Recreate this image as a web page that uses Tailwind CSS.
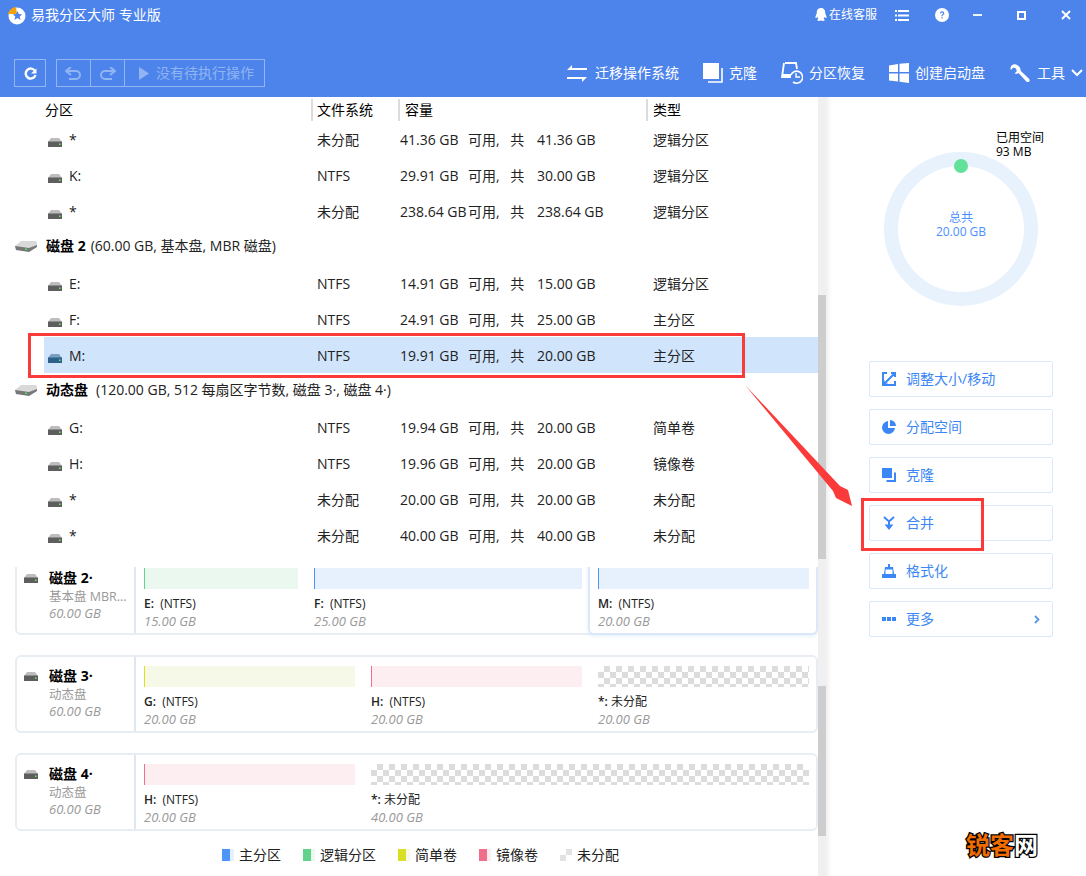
<!DOCTYPE html>
<html lang="zh">
<head>
<meta charset="utf-8">
<title>易我分区大师</title>
<script src="https://cdn.jsdelivr.net/npm/@tailwindcss/browser@4"></script>
</head>
<body class="bg-white">
<div class="relative w-[1086px] h-[876px] overflow-hidden bg-white text-black text-[14px] leading-5 font-['Open_Sans','Noto_Sans_CJK_SC',sans-serif]">

  <!-- header -->
  <header class="h-[97px] bg-[#4d84eb] text-white">
    <div class="h-[30px] flex items-center">
      <svg class="ml-[7px] w-[19px] h-[19px]" viewBox="0 0 19 19">
        <circle cx="10" cy="10" r="8.5" fill="#fff"/>
        <path d="M1 8 C2 4 5 1.500 9 1 L10 8 Z" fill="#f5a30c"/>
        <path d="M10.500 5l1.400 3.100 3.300.3-2.500 2.200.8 3.300-3-1.800-3 1.800.8-3.300-2.500-2.200 3.300-.3z" fill="#4d84eb"/>
      </svg>
      <span class="ml-[5px] w-[784px]">易我分区大师 专业版</span>
      <svg class="w-[12px] h-[14px]" viewBox="0 0 12 14"><path d="M6 0c3 0 4.200 2.200 4.200 4.500 0 1.500.6 2 1.200 3.800.5 1.800-.3 2.200-1.200 1.200L9.500 9c-.2 1-.7 1.700-1 2 1 .3 1.500 1 1 1.600-.6.600-2.400.4-3.500-.1-1.100.5-2.900.7-3.500.1-.5-.6 0-1.300 1-1.600-.3-.3-.8-1-1-2l-.7.5C.9 10.500.1 10.100.6 8.300 1.200 6.500 1.800 6 1.800 4.500 1.800 2.200 3 0 6 0z" fill="#fff"/></svg>
      <span class="ml-[2px] text-[12px] w-[48px] whitespace-nowrap">在线客服</span>
      <svg class="ml-[18px] w-[14px] h-[11px]" viewBox="0 0 14 11" fill="#fff"><rect width="2" height="2"/><rect x="3" width="11" height="2"/><rect y="4.500" width="2" height="2"/><rect x="3" y="4.500" width="11" height="2"/><rect y="9" width="2" height="2"/><rect x="3" y="9" width="11" height="2"/></svg>
      <svg class="ml-[26px] w-[14px] h-[14px]" viewBox="0 0 14 14"><circle cx="7" cy="7" r="7" fill="#fff"/><path d="M4.800 5.300C4.900 4 5.900 3.300 7.100 3.300c1.300 0 2.200.8 2.200 1.900 0 1.600-1.800 1.600-1.800 3.100H6.300c0-2 1.700-2 1.700-3.100 0-.5-.4-.8-.9-.8-.6 0-1 .4-1 1zM6.300 9.200h1.300v1.400H6.300z" fill="#4d84eb"/></svg>
      <div class="ml-[24px] w-[9px] h-[2px] bg-white/90"></div>
      <div class="ml-[35px] w-[9px] h-[9px] border-2 border-white"></div>
      <svg class="ml-[35px] w-[10px] h-[10px]" viewBox="0 0 10 10"><path d="M1 1l8 8M9 1l-8 8" stroke="#fff" stroke-width="2"/></svg>
    </div>
    <div class="mt-[29px] h-[28px] flex items-center">
      <div class="ml-[14px] w-[32px] h-[28px] border border-white/40 flex items-center justify-center">
        <svg class="w-[13px] h-[13px]" viewBox="0 0 13 13"><path d="M11 4A5 5 0 1 0 11.500 8" fill="none" stroke="#fff" stroke-width="2.400"/><path d="M7 6.500h5.500V1.500z" fill="#fff"/></svg>
      </div>
      <div class="ml-[10px] w-[209px] h-[28px] border border-white/40 flex items-stretch text-[#91b4f3]">
        <div class="w-[34px] border-r border-white/40 flex items-center justify-center">
          <svg class="w-[17px] h-[13px]" viewBox="0 0 17 13"><path d="M2 4h9a4 4 0 0 1 0 8H4" fill="none" stroke="#91b4f3" stroke-width="2"/><path d="M6 0L1 4l5 4" fill="none" stroke="#91b4f3" stroke-width="2"/></svg>
        </div>
        <div class="w-[34px] border-r border-white/40 flex items-center justify-center">
          <svg class="w-[17px] h-[13px]" viewBox="0 0 17 13"><path d="M15 4H6a4 4 0 0 0 0 8h7" fill="none" stroke="#91b4f3" stroke-width="2"/><path d="M11 0l5 4-5 4" fill="none" stroke="#91b4f3" stroke-width="2"/></svg>
        </div>
        <div class="flex items-center pl-[14px]">
          <svg class="w-[10px] h-[13px]" viewBox="0 0 10 13"><path d="M0 0l10 6.500L0 13z" fill="#91b4f3"/></svg>
          <span class="ml-[7px]">没有待执行操作</span>
        </div>
      </div>
      <div class="ml-[302px] flex items-center whitespace-nowrap">
        <svg class="w-[20px] h-[17px]" viewBox="0 0 20 17" fill="#fff"><path d="M5 0v3h15v2H0z"/><path d="M15 17v-3H0v-2h20z"/></svg>
        <span class="ml-[8px] w-[84px]">迁移操作系统</span>
        <svg class="ml-[24px] w-[20px] h-[20px]" viewBox="0 0 20 20"><rect width="16" height="16" fill="#fff"/><path d="M19 5v14H5" fill="none" stroke="#fff" stroke-width="1.600"/></svg>
        <span class="ml-[6px] w-[28px]">克隆</span>
        <svg class="ml-[24px] w-[22px] h-[22px]" viewBox="0 0 22 22"><path d="M4 1h11l1 6M3 1L1 15h9" fill="none" stroke="#fff" stroke-width="1.800"/><rect x="1" y="12" width="9" height="3" fill="#fff"/><path d="M10 13a6 6 0 1 1 2 7" fill="none" stroke="#fff" stroke-width="1.600"/><path d="M15 11v4h4" fill="none" stroke="#fff" stroke-width="1.400"/></svg>
        <span class="ml-[6px] w-[56px]">分区恢复</span>
        <svg class="ml-[24px] w-[20px] h-[20px]" viewBox="0 0 20 20" fill="#fff"><path d="M0 2.500L9 1v8H0zM10.500.8L20 0v9h-9.500zM0 10.500h9v8L0 17.500zM10.500 10.500H20V20l-9.500-1.200z"/></svg>
        <span class="ml-[6px] w-[70px]">创建启动盘</span>
        <svg class="ml-[25px] w-[20px] h-[20px]" viewBox="0 0 20 20"><path d="M6 1.500C3.500.5 1 2 .6 4.500c-.2 1 0 1.800.3 2.400L3.300 4.600 6 5.500l.8 2.700-2.300 2.300c1.400.6 3 .3 4-.6l7.800 8.600c.8.800 2 .8 2.800 0 .8-.8.700-2-.1-2.800l-8.400-8C11 5.200 9 2.700 6 1.500z" fill="#fff"/></svg>
        <span class="ml-[7px] w-[28px]">工具</span>
        <svg class="ml-[6px] w-[12px] h-[8px]" viewBox="0 0 12 8"><path d="M1 1l5 5 5-5" fill="none" stroke="#fff" stroke-width="2"/></svg>
      </div>
    </div>
  </header>

  <!-- main -->
  <main class="flex h-[779px]">
    <section class="w-[827px] flex flex-col">
      <!-- table -->
      <div class="h-[470px] flex relative z-10 bg-white">
        <div class="w-[818px] overflow-hidden">
          <div class="h-[25px] flex items-center">
            <div class="w-[313px] pl-[45px] h-[22px] leading-[22px] border-r-2 border-[#dcdcdc]">分区</div>
            <div class="w-[87px] pl-[4px] h-[22px] leading-[22px] border-r-2 border-[#dcdcdc]">文件系统</div>
            <div class="w-[248px] pl-[5px] h-[22px] leading-[22px] border-r-2 border-[#dcdcdc]">容量</div>
            <div class="pl-[5px] leading-[22px]">类型</div>
          </div>

          <div class="h-[36px] flex items-center text-[#222]">
            <div class="w-[317px] pl-[48px] flex items-center"><svg class="mt-[4px] w-[14px] h-[9px]" viewBox="0 0 14 9"><path d="M3 0h8l3 4H0z" fill="#bdbdbd"/><rect y="3.500" width="14" height="5.500" fill="#5e5e5e"/><rect x="11" y="5.500" width="1.500" height="1.500" fill="#5f5"/></svg><span class="ml-[7px]">*</span></div>
            <div class="w-[83px]">未分配</div><div class="w-[68px]">41.36 GB</div><div class="w-[69px] [word-spacing:7px]">可用, 共</div><div class="w-[116px]">41.36 GB</div><div>逻辑分区</div>
          </div>
          <div class="h-[36px] flex items-center text-[#222]">
            <div class="w-[317px] pl-[48px] flex items-center"><svg class="mt-[4px] w-[14px] h-[9px]" viewBox="0 0 14 9"><path d="M3 0h8l3 4H0z" fill="#bdbdbd"/><rect y="3.500" width="14" height="5.500" fill="#5e5e5e"/><rect x="11" y="5.500" width="1.500" height="1.500" fill="#5f5"/></svg><span class="ml-[7px]">K:</span></div>
            <div class="w-[83px]">NTFS</div><div class="w-[68px]">29.91 GB</div><div class="w-[69px] [word-spacing:7px]">可用, 共</div><div class="w-[116px]">30.00 GB</div><div>逻辑分区</div>
          </div>
          <div class="h-[36px] flex items-center text-[#222]">
            <div class="w-[317px] pl-[48px] flex items-center"><svg class="mt-[4px] w-[14px] h-[9px]" viewBox="0 0 14 9"><path d="M3 0h8l3 4H0z" fill="#bdbdbd"/><rect y="3.500" width="14" height="5.500" fill="#5e5e5e"/><rect x="11" y="5.500" width="1.500" height="1.500" fill="#5f5"/></svg><span class="ml-[7px]">*</span></div>
            <div class="w-[83px]">未分配</div><div class="w-[68px] whitespace-nowrap">238.64 GB</div><div class="w-[69px] [word-spacing:7px]">可用, 共</div><div class="w-[116px]">238.64 GB</div><div>逻辑分区</div>
          </div>

          <div class="h-[32px] mb-[4px] flex items-center">
            <svg class="ml-[15px] w-[22px] h-[11px]" viewBox="0 0 22 11"><path d="M6 0h15l1 2v3L14 10 1 8 0 5z" fill="#d9d9d9"/><path d="M0 5l14 2 8-3v2l-8 5L1 9z" fill="#777"/><rect x="10" y="7.500" width="2" height="1.500" fill="#5d5"/></svg>
            <span class="ml-[9px] font-bold">磁盘 2</span><span class="ml-[5px] text-[#222]">(60.00 GB, 基本盘, MBR 磁盘)</span>
          </div>

          <div class="h-[36px] flex items-center text-[#222]">
            <div class="w-[317px] pl-[48px] flex items-center"><svg class="mt-[4px] w-[14px] h-[9px]" viewBox="0 0 14 9"><path d="M3 0h8l3 4H0z" fill="#bdbdbd"/><rect y="3.500" width="14" height="5.500" fill="#5e5e5e"/><rect x="11" y="5.500" width="1.500" height="1.500" fill="#5f5"/></svg><span class="ml-[7px]">E:</span></div>
            <div class="w-[83px]">NTFS</div><div class="w-[68px]">14.91 GB</div><div class="w-[69px] [word-spacing:7px]">可用, 共</div><div class="w-[116px]">15.00 GB</div><div>逻辑分区</div>
          </div>
          <div class="h-[36px] flex items-center text-[#222]">
            <div class="w-[317px] pl-[48px] flex items-center"><svg class="mt-[4px] w-[14px] h-[9px]" viewBox="0 0 14 9"><path d="M3 0h8l3 4H0z" fill="#bdbdbd"/><rect y="3.500" width="14" height="5.500" fill="#5e5e5e"/><rect x="11" y="5.500" width="1.500" height="1.500" fill="#5f5"/></svg><span class="ml-[7px]">F:</span></div>
            <div class="w-[83px]">NTFS</div><div class="w-[68px]">24.91 GB</div><div class="w-[69px] [word-spacing:7px]">可用, 共</div><div class="w-[116px]">25.00 GB</div><div>主分区</div>
          </div>
          <div class="h-[36px] -mt-[1px] mb-[1px] pt-[2px] flex items-center text-[#222] ml-[44px] bg-[#d0e5fc]">
            <div class="w-[273px] pl-[4px] flex items-center"><svg class="mt-[4px] w-[14px] h-[9px]" viewBox="0 0 14 9"><path d="M3 0h8l3 4H0z" fill="#7b9fc0"/><rect y="3.500" width="14" height="5.500" fill="#2f6089"/><rect x="11" y="5.500" width="1.500" height="1.500" fill="#5f5"/></svg><span class="ml-[7px]">M:</span></div>
            <div class="w-[83px]">NTFS</div><div class="w-[68px]">19.91 GB</div><div class="w-[69px] [word-spacing:7px]">可用, 共</div><div class="w-[116px]">20.00 GB</div><div>主分区</div>
          </div>

          <div class="h-[32px] mb-[4px] flex items-center">
            <svg class="ml-[15px] w-[22px] h-[11px]" viewBox="0 0 22 11"><path d="M6 0h15l1 2v3L14 10 1 8 0 5z" fill="#d9d9d9"/><path d="M0 5l14 2 8-3v2l-8 5L1 9z" fill="#777"/><rect x="10" y="7.500" width="2" height="1.500" fill="#5d5"/></svg>
            <span class="ml-[9px] font-bold">动态盘</span><span class="ml-[8px] text-[#222]">(120.00 GB, 512 每扇区字节数, 磁盘 3·, 磁盘 4·)</span>
          </div>

          <div class="h-[36px] flex items-center text-[#222]">
            <div class="w-[317px] pl-[48px] flex items-center"><svg class="mt-[4px] w-[14px] h-[9px]" viewBox="0 0 14 9"><path d="M3 0h8l3 4H0z" fill="#bdbdbd"/><rect y="3.500" width="14" height="5.500" fill="#5e5e5e"/><rect x="11" y="5.500" width="1.500" height="1.500" fill="#5f5"/></svg><span class="ml-[7px]">G:</span></div>
            <div class="w-[83px]">NTFS</div><div class="w-[68px]">19.94 GB</div><div class="w-[69px] [word-spacing:7px]">可用, 共</div><div class="w-[116px]">20.00 GB</div><div>简单卷</div>
          </div>
          <div class="h-[36px] flex items-center text-[#222]">
            <div class="w-[317px] pl-[48px] flex items-center"><svg class="mt-[4px] w-[14px] h-[9px]" viewBox="0 0 14 9"><path d="M3 0h8l3 4H0z" fill="#bdbdbd"/><rect y="3.500" width="14" height="5.500" fill="#5e5e5e"/><rect x="11" y="5.500" width="1.500" height="1.500" fill="#5f5"/></svg><span class="ml-[7px]">H:</span></div>
            <div class="w-[83px]">NTFS</div><div class="w-[68px]">19.96 GB</div><div class="w-[69px] [word-spacing:7px]">可用, 共</div><div class="w-[116px]">20.00 GB</div><div>镜像卷</div>
          </div>
          <div class="h-[36px] flex items-center text-[#222]">
            <div class="w-[317px] pl-[48px] flex items-center"><svg class="mt-[4px] w-[14px] h-[9px]" viewBox="0 0 14 9"><path d="M3 0h8l3 4H0z" fill="#bdbdbd"/><rect y="3.500" width="14" height="5.500" fill="#5e5e5e"/><rect x="11" y="5.500" width="1.500" height="1.500" fill="#5f5"/></svg><span class="ml-[7px]">*</span></div>
            <div class="w-[83px]">未分配</div><div class="w-[68px]">20.00 GB</div><div class="w-[69px] [word-spacing:7px]">可用, 共</div><div class="w-[116px]">20.00 GB</div><div>未分配</div>
          </div>
          <div class="h-[36px] flex items-center text-[#222]">
            <div class="w-[317px] pl-[48px] flex items-center"><svg class="mt-[4px] w-[14px] h-[9px]" viewBox="0 0 14 9"><path d="M3 0h8l3 4H0z" fill="#bdbdbd"/><rect y="3.500" width="14" height="5.500" fill="#5e5e5e"/><rect x="11" y="5.500" width="1.500" height="1.500" fill="#5f5"/></svg><span class="ml-[7px]">*</span></div>
            <div class="w-[83px]">未分配</div><div class="w-[68px]">40.00 GB</div><div class="w-[69px] [word-spacing:7px]">可用, 共</div><div class="w-[116px]">40.00 GB</div><div>未分配</div>
          </div>
        </div>
        <div class="w-[9px] bg-[#f0f0f0]"><div class="mt-[198px] h-[264px] w-[8px] bg-[#cdcdcd]"></div></div>
      </div>

      <!-- disk map -->
      <div class="h-[309px] flex">
        <div class="w-[818px] overflow-hidden">
          <div class="-mt-[10px] ml-[15px] w-[803px] flex flex-col gap-[20px]">

            <div class="h-[78px] flex border-2 border-[#e8edf3] rounded-[6px]">
              <div class="w-[119px] shrink-0 border-r-2 border-[#e0e6ee] flex">
                <svg class="ml-[7px] mt-[15px] w-[14px] h-[9px]" viewBox="0 0 14 9"><path d="M3 0h8l3 4H0z" fill="#bdbdbd"/><rect y="3.500" width="14" height="5.500" fill="#5e5e5e"/><rect x="11" y="5.500" width="1.500" height="1.500" fill="#5f5"/></svg>
                <div class="ml-[11px] mt-[9px] text-[12.5px] leading-[17px] whitespace-nowrap">
                  <div class="text-[14px] font-bold leading-[20px]">磁盘 2·</div>
                  <div class="text-[#999]">基本盘 MBR...</div>
                  <div class="text-[#999] italic text-[13px]">60.00 GB</div>
                </div>
              </div>
              <div class="flex-1 relative pt-[9px] pl-[8px] flex text-[12px]">
                <div class="w-[154px] mr-[16px]">
                  <div class="h-[21px] bg-[#ebf8f0] border-l border-[#5fd68d]"></div>
                  <div class="mt-[6px] leading-[18px] text-[#222]"><b class="font-semibold">E:</b>&nbsp; (NTFS)</div>
                  <div class="text-[#999] italic leading-[16px] text-[13px]">15.00 GB</div>
                </div>
                <div class="w-[268px] mr-[16px]">
                  <div class="h-[21px] bg-[#e6f1fd] border-l border-[#4d95f5]"></div>
                  <div class="mt-[6px] leading-[18px] text-[#222]"><b class="font-semibold">F:</b>&nbsp; (NTFS)</div>
                  <div class="text-[#999] italic leading-[16px] text-[13px]">25.00 GB</div>
                </div>
                <div class="w-[211px]">
                  <div class="h-[21px] bg-[#e6f1fd] border-l border-[#4d95f5]"></div>
                  <div class="mt-[6px] leading-[18px] text-[#222]"><b class="font-semibold">M:</b>&nbsp; (NTFS)</div>
                  <div class="text-[#999] italic leading-[16px] text-[13px]">20.00 GB</div>
                </div>
                <div class="absolute left-[452px] right-[-2px] top-0 bottom-[-2px] border-2 border-[#dbe8fb] rounded-[6px] shadow-[0_1px_4px_rgba(77,149,245,0.15)]"></div>
              </div>
            </div>

            <div class="h-[78px] flex border-2 border-[#e8edf3] rounded-[6px]">
              <div class="w-[119px] shrink-0 border-r-2 border-[#e0e6ee] flex">
                <svg class="ml-[7px] mt-[15px] w-[14px] h-[9px]" viewBox="0 0 14 9"><path d="M3 0h8l3 4H0z" fill="#bdbdbd"/><rect y="3.500" width="14" height="5.500" fill="#5e5e5e"/><rect x="11" y="5.500" width="1.500" height="1.500" fill="#5f5"/></svg>
                <div class="ml-[11px] mt-[9px] text-[12.5px] leading-[17px] whitespace-nowrap">
                  <div class="text-[14px] font-bold leading-[20px]">磁盘 3·</div>
                  <div class="text-[#999]">动态盘</div>
                  <div class="text-[#999] italic text-[13px]">60.00 GB</div>
                </div>
              </div>
              <div class="flex-1 pt-[9px] pl-[8px] flex text-[12px]">
                <div class="w-[211px] mr-[16px]">
                  <div class="h-[21px] bg-[#f6f9e8] border-l border-[#dfe018]"></div>
                  <div class="mt-[6px] leading-[18px] text-[#222]"><b class="font-semibold">G:</b>&nbsp; (NTFS)</div>
                  <div class="text-[#999] italic leading-[16px] text-[13px]">20.00 GB</div>
                </div>
                <div class="w-[211px] mr-[16px]">
                  <div class="h-[21px] bg-[#fdeef1] border-l border-[#f0708a]"></div>
                  <div class="mt-[6px] leading-[18px] text-[#222]"><b class="font-semibold">H:</b>&nbsp; (NTFS)</div>
                  <div class="text-[#999] italic leading-[16px] text-[13px]">20.00 GB</div>
                </div>
                <div class="w-[211px]">
                  <div class="h-[21px] bg-[conic-gradient(#dcdcdc_25%,#fff_0_50%,#dcdcdc_0_75%,#fff_0)] bg-[length:12px_12px]"></div>
                  <div class="mt-[6px] leading-[18px] text-[#222]"><b class="font-semibold">*:</b> 未分配</div>
                  <div class="text-[#999] italic leading-[16px] text-[13px]">20.00 GB</div>
                </div>
              </div>
            </div>

            <div class="h-[78px] flex border-2 border-[#e8edf3] rounded-[6px]">
              <div class="w-[119px] shrink-0 border-r-2 border-[#e0e6ee] flex">
                <svg class="ml-[7px] mt-[15px] w-[14px] h-[9px]" viewBox="0 0 14 9"><path d="M3 0h8l3 4H0z" fill="#bdbdbd"/><rect y="3.500" width="14" height="5.500" fill="#5e5e5e"/><rect x="11" y="5.500" width="1.500" height="1.500" fill="#5f5"/></svg>
                <div class="ml-[11px] mt-[9px] text-[12.5px] leading-[17px] whitespace-nowrap">
                  <div class="text-[14px] font-bold leading-[20px]">磁盘 4·</div>
                  <div class="text-[#999]">动态盘</div>
                  <div class="text-[#999] italic text-[13px]">60.00 GB</div>
                </div>
              </div>
              <div class="flex-1 pt-[9px] pl-[8px] flex text-[12px]">
                <div class="w-[211px] mr-[16px]">
                  <div class="h-[21px] bg-[#fdeef1] border-l border-[#f0708a]"></div>
                  <div class="mt-[6px] leading-[18px] text-[#222]"><b class="font-semibold">H:</b>&nbsp; (NTFS)</div>
                  <div class="text-[#999] italic leading-[16px] text-[13px]">20.00 GB</div>
                </div>
                <div class="w-[438px]">
                  <div class="h-[21px] bg-[conic-gradient(#dcdcdc_25%,#fff_0_50%,#dcdcdc_0_75%,#fff_0)] bg-[length:12px_12px]"></div>
                  <div class="mt-[6px] leading-[18px] text-[#222]"><b class="font-semibold">*:</b> 未分配</div>
                  <div class="text-[#999] italic leading-[16px] text-[13px]">40.00 GB</div>
                </div>
              </div>
            </div>
          </div>

          <div class="mt-[14px] flex items-center h-[20px] text-[#222]">
            <div class="ml-[222px] w-[12px] h-[12px] flex"><div class="w-[8px] bg-[#4d95f8]"></div><div class="w-[4px] bg-[#e6f1fd]"></div></div>
            <span class="ml-[5px] w-[42px]">主分区</span>
            <div class="ml-[22px] w-[12px] h-[12px] flex"><div class="w-[8px] bg-[#62d38c]"></div><div class="w-[4px] bg-[#ebf8f0]"></div></div>
            <span class="ml-[5px] w-[56px]">逻辑分区</span>
            <div class="ml-[22px] w-[12px] h-[12px] flex"><div class="w-[8px] bg-[#d9df25]"></div><div class="w-[4px] bg-[#f6f9e8]"></div></div>
            <span class="ml-[5px] w-[42px]">简单卷</span>
            <div class="ml-[22px] w-[12px] h-[12px] flex"><div class="w-[8px] bg-[#f0708a]"></div><div class="w-[4px] bg-[#fdeef1]"></div></div>
            <span class="ml-[5px] w-[42px]">镜像卷</span>
            <div class="ml-[22px] w-[12px] h-[12px] bg-[conic-gradient(#e2e2e2_25%,#fff_0_50%,#e2e2e2_0_75%,#fff_0)] bg-[length:12px_12px]"></div>
            <span class="ml-[5px]">未分配</span>
          </div>
        </div>
        <div class="w-[9px] bg-[#f0f0f0]"><div class="mt-[119px] h-[150px] w-[8px] bg-[#cdcdcd]"></div></div>
      </div>
    </section>

    <!-- right panel -->
    <aside class="w-[259px] pl-[42px] bg-[linear-gradient(90deg,#f4f4f4,#fff_5px)]">
      <div class="relative ml-[15px] mt-[55px] w-[154px] h-[154px] rounded-full border-[14px] border-[#e8f2fd] flex flex-col items-center justify-center pb-[8px] text-[12px] leading-[14px] text-[#4a90ff]">
        <span>总共</span>
        <span>20.00 GB</span>
        <div class="absolute left-[56px] -top-[7px] w-[14px] h-[14px] rounded-full bg-[#62e19b]"></div>
        <div class="absolute left-[98px] -top-[35px] text-black whitespace-nowrap">已用空间<br>93 MB</div>
      </div>

      <div class="mt-[55px] flex flex-col gap-[12px] w-[184px] text-[#3b87f5]">
        <div class="h-[36px] border border-[#dbe8fb] rounded-[2px] flex items-center pl-[12px]">
          <svg class="w-[14px] h-[14px]" viewBox="0 0 14 14"><path d="M5 1H1v12h12V9M9 1h4v4M12.500 1.500l-11 11M1.500 8v4.500H6" fill="none" stroke="#3b87f5" stroke-width="2"/></svg>
          <span class="ml-[10px]">调整大小/移动</span>
        </div>
        <div class="h-[36px] border border-[#dbe8fb] rounded-[2px] flex items-center pl-[12px]">
          <svg class="w-[14px] h-[14px]" viewBox="0 0 14 14" fill="#3b87f5"><path d="M6 1v7h7a6.500 6.500 0 1 1-7-7z"/><path d="M8 0a6 6 0 0 1 6 6H8z"/></svg>
          <span class="ml-[10px]">分配空间</span>
        </div>
        <div class="h-[36px] border border-[#dbe8fb] rounded-[2px] flex items-center pl-[12px]">
          <svg class="w-[14px] h-[14px]" viewBox="0 0 14 14"><rect width="10" height="10" fill="#3b87f5"/><path d="M13 4.500V13H4.500" fill="none" stroke="#3b87f5" stroke-width="2"/></svg>
          <span class="ml-[10px]">克隆</span>
        </div>
        <div class="h-[36px] border border-[#dbe8fb] rounded-[2px] flex items-center pl-[12px]">
          <svg class="w-[14px] h-[14px]" viewBox="0 0 14 14"><path d="M2 1l5 4.500L12 1M7 5v5" fill="none" stroke="#3b87f5" stroke-width="2"/><path d="M2.500 8.500h9L7 14z" fill="#3b87f5"/></svg>
          <span class="ml-[10px]">合并</span>
        </div>
        <div class="h-[36px] border border-[#dbe8fb] rounded-[2px] flex items-center pl-[12px]">
          <svg class="w-[14px] h-[14px]" viewBox="0 0 14 14"><rect x="6" width="2" height="3" fill="#3b87f5"/><path d="M3 3h8l1 7h2v4H0v-4h2z" fill="#3b87f5"/><rect x="3.500" y="5.500" width="7" height="4.500" fill="#fff"/></svg>
          <span class="ml-[10px]">格式化</span>
        </div>
        <div class="h-[36px] border border-[#dbe8fb] rounded-[2px] flex items-center pl-[12px] pr-[12px]">
          <svg class="w-[14px] h-[4px]" viewBox="0 0 14 4" fill="#3b87f5"><rect width="4" height="4"/><rect x="5" width="4" height="4"/><rect x="10" width="4" height="4"/></svg>
          <span class="ml-[10px] flex-1">更多</span>
          <svg class="w-[6px] h-[9px]" viewBox="0 0 6 9"><path d="M1 1l3.500 3.500L1 8" fill="none" stroke="#5b96ea" stroke-width="1.800"/></svg>
        </div>
      </div>
    </aside>
  </main>

  <!-- annotations over the screenshot -->
  <div class="absolute z-20 left-[28px] top-[333px] w-[717px] h-[45px] border-[3px] border-[#fb3a3a]"></div>
  <div class="absolute z-20 left-[861px] top-[498px] w-[123px] h-[53px] border-[3px] border-[#fb3a3a]"></div>
  <svg class="absolute z-20 left-[740px] top-[380px] w-[120px] h-[135px]" viewBox="0 0 120 135"><path d="M5 5L100 106 108 110 112 126 96 118 93 111z" fill="#fb3a3a"/></svg>
  <div class="absolute z-20 left-[966px] top-[829px] text-[24px] leading-[32px] font-bold text-[#ef6c00] [-webkit-text-stroke:2.5px_#000] [paint-order:stroke_fill]">锐客<span class="text-white">网</span></div>
</div>
</body>
</html>
